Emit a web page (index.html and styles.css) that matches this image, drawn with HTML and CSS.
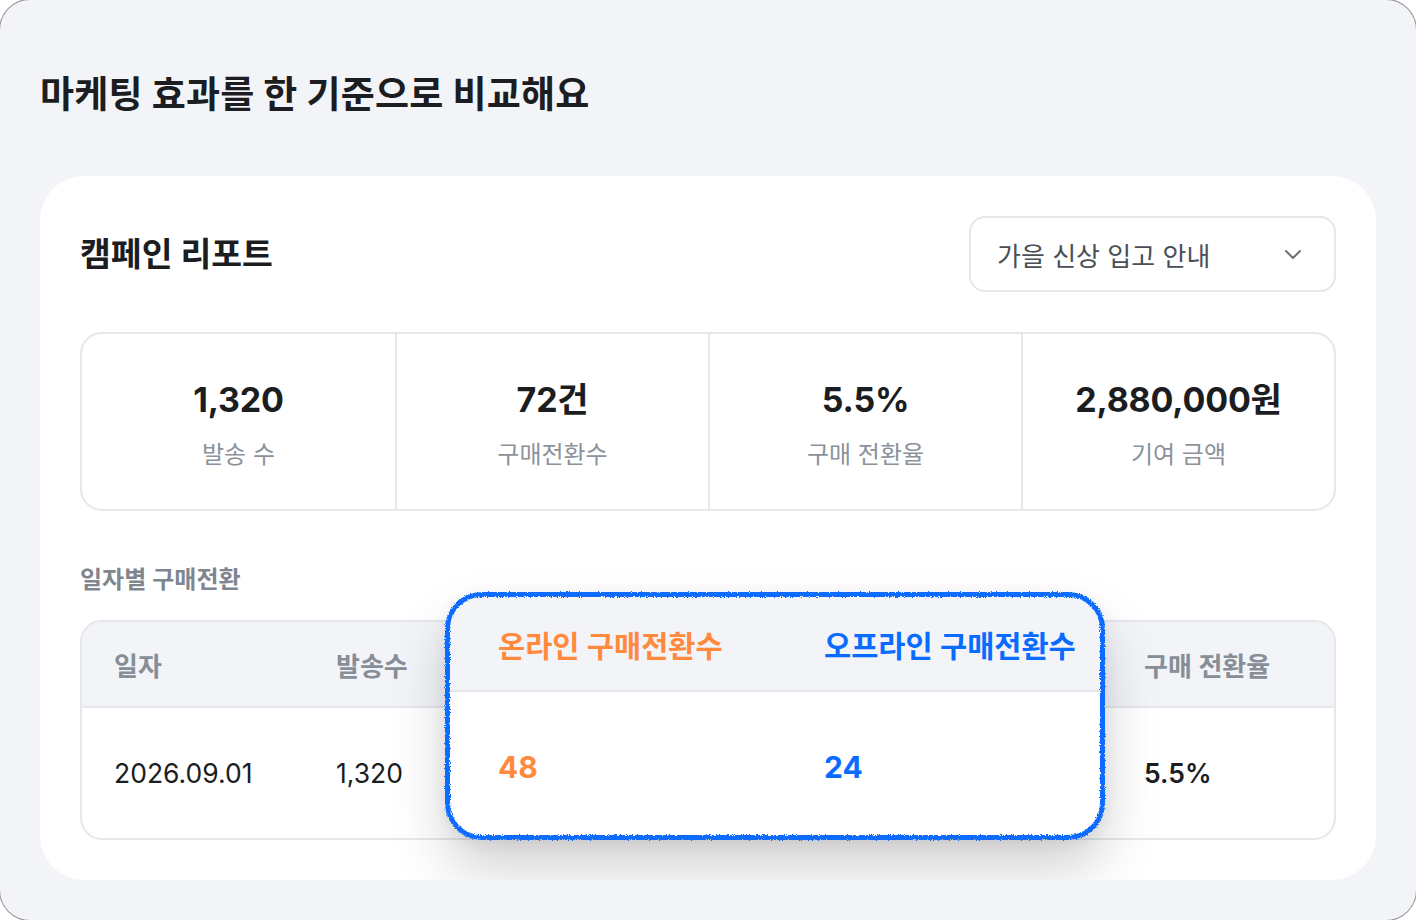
FILE: index.html
```html
<!DOCTYPE html>
<html lang="ko">
<head>
<meta charset="utf-8">
<title>마케팅 효과 비교</title>
<link rel="stylesheet" href="styles.css">
</head>
<body>
<svg class="defs" aria-hidden="true">
  <filter id="rough" x="-3%" y="-3%" width="106%" height="106%">
    <feTurbulence type="fractalNoise" baseFrequency="0.9" numOctaves="2" seed="3" result="noise"/>
    <feDisplacementMap in="SourceGraphic" in2="noise" scale="3.5" xChannelSelector="R" yChannelSelector="G"/>
  </filter>
</svg>
<div class="screen">
  <h1 class="page-title">마케팅 효과를 한 기준으로 비교해요</h1>
  <section class="card">
    <div class="card-head">
      <h2 class="card-title">캠페인 리포트</h2>
      <div class="select">
        <span class="select-text">가을 신상 입고 안내</span>
        <svg class="chev" width="18" height="11" viewBox="0 0 18 11"><path d="M2 2l7 7 7-7" fill="none" stroke="#6b727c" stroke-width="2" stroke-linecap="round" stroke-linejoin="round"/></svg>
      </div>
    </div>
    <div class="stats">
      <div class="stat"><div class="stat-value">1,320</div><div class="stat-label">발송 수</div></div>
      <div class="stat"><div class="stat-value">72건</div><div class="stat-label">구매전환수</div></div>
      <div class="stat"><div class="stat-value">5.5%</div><div class="stat-label">구매 전환율</div></div>
      <div class="stat"><div class="stat-value">2,880,000원</div><div class="stat-label">기여 금액</div></div>
    </div>
    <div class="section-label">일자별 구매전환</div>
    <div class="table-wrap">
      <div class="table">
        <div class="row head">
          <div>일자</div><div>발송수</div><div class="hidden-col">온라인</div><div class="hidden-col">오프라인</div><div>구매 전환율</div>
        </div>
        <div class="row body">
          <div>2026.09.01</div><div>1,320</div><div class="hidden-col">48</div><div class="hidden-col">24</div><div class="strong">5.5%</div>
        </div>
      </div>
      <div class="popout">
        <div class="pop-inner">
          <div class="pop-row pop-head">
            <div class="orange">온라인 구매전환수</div><div class="blue">오프라인 구매전환수</div>
          </div>
          <div class="pop-row pop-body">
            <div class="orange">48</div><div class="blue">24</div>
          </div>
        </div>
        <div class="pop-outline"></div>
      </div>
    </div>
  </section>
</div>
</body>
</html>
```

FILE: styles.css
```css
* { box-sizing: border-box; margin: 0; padding: 0; }
html, body { width: 1416px; height: 920px; overflow: hidden; background: #ffffff; }
body { font-family: Inter, "Noto Sans CJK KR", sans-serif; color: #1b1d21; }

.defs { position: absolute; width: 0; height: 0; }

.screen {
  width: 1416px;
  height: 920px;
  background: #f3f4f8;
  border-radius: 30px;
  box-shadow: 0 0 0 1px rgba(60, 60, 60, 0.55);
  padding: 75px 40px 40px;
  overflow: hidden;
}

.page-title {
  font-size: 37px;
  font-weight: 700;
  line-height: 40px;
  letter-spacing: 0.2px;
  color: #1b1d21;
}

.card {
  margin-top: 61px;
  height: 704px;
  background: #ffffff;
  border-radius: 44px;
  padding: 40px 40px 0;
  overflow: hidden;
}

.card-head {
  display: flex;
  align-items: center;
  justify-content: space-between;
  height: 76px;
}
.card-title { font-size: 33.5px; font-weight: 700; letter-spacing: 0; line-height: 40px; }

.select {
  width: 367px;
  height: 76px;
  border: 2px solid #e4e7eb;
  border-radius: 16px;
  display: flex;
  align-items: center;
  justify-content: space-between;
  padding: 0 32px 0 26px;
}
.select-text { font-size: 26px; color: #4a4f57; letter-spacing: 0; }
.chev { display: block; }

.stats {
  margin-top: 40px;
  height: 179px;
  border: 2px solid #e4e7eb;
  border-radius: 22px;
  display: grid;
  grid-template-columns: repeat(4, 1fr);
}
.stat {
  display: flex;
  flex-direction: column;
  align-items: center;
  padding-top: 44px;
}
.stat + .stat { border-left: 2px solid #e4e7eb; }
.stat-value { font-size: 34px; font-weight: 700; line-height: 44px; letter-spacing: -0.2px; color: #1b1d21; }
.stat-label { margin-top: 17px; font-size: 24px; line-height: 32px; color: #8b929b; }

.section-label {
  margin-top: 53px;
  font-size: 24px;
  font-weight: 600;
  line-height: 32px;
  color: #7f868f;
}

.table-wrap { position: relative; margin-top: 24px; }
.table {
  border: 2px solid #e4e7eb;
  border-radius: 22px;
  overflow: hidden;
}
.row {
  display: grid;
  grid-template-columns: 222px 222px 293px 293px 1fr;
  padding-left: 32px;
  align-items: center;
}
.row.head { height: 86px; background: #f3f4f8; border-bottom: 2px solid #e4e7eb; font-size: 26px; font-weight: 600; color: #878e97; }
.row.body { height: 130px; font-size: 26.5px; color: #1b1d21; }
.row.body .strong { font-weight: 600; }
.hidden-col { visibility: hidden; }

.popout {
  position: absolute;
  left: 366px;
  top: -27px;
  width: 658px;
  height: 246px;
  border-radius: 36px;
  box-shadow: 0 30px 56px rgba(0, 0, 0, 0.18), 0 4px 16px rgba(0, 0, 0, 0.07);
  background: #ffffff;
}
.pop-inner {
  width: 100%;
  height: 100%;
  border-radius: 36px;
  overflow: hidden;
}
.pop-row {
  display: grid;
  grid-template-columns: 326px 1fr;
  padding-left: 52px;
  align-items: center;
}
.pop-head {
  height: 99px;
  background: #f3f4f8;
  border-bottom: 2px solid #e4e7eb;
  font-size: 29.5px;
  font-weight: 600;
  padding-top: 4px;
  white-space: nowrap;
}
.pop-body { height: 143px; font-size: 30px; font-weight: 700; padding-top: 6px; }
.orange { color: #ff8a3d; }
.blue { color: #0a6cff; }

.pop-outline {
  position: absolute;
  inset: -1px;
  border: 5px solid #0a6cff;
  border-radius: 37px;
  filter: url(#rough);
  pointer-events: none;
}
```
